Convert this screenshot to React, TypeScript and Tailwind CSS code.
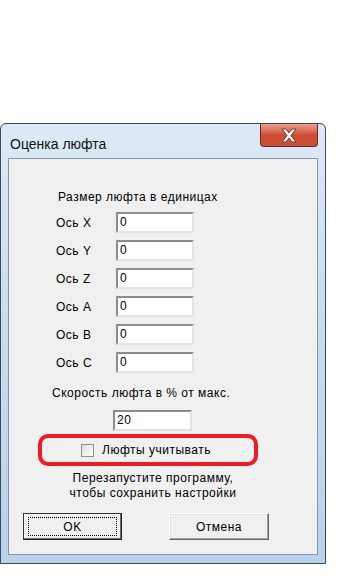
const axes = ['X', 'Y', 'Z', 'A', 'B', 'C']

function Field({ value, w = 'w-[78px]' }: { value: string; w?: string }) {
  return (
    <div
      className={`${w} h-[21px] border-2 border-t-[#8c8c8c] border-l-[#8c8c8c] border-r-[#e3e3e3] border-b-[#e3e3e3] bg-white pl-[2px] text-[12px] leading-[16px]`}
    >
      {value}
    </div>
  )
}

export default function App() {
  return (
    <div className="h-[576px] w-[340px] overflow-hidden bg-white pt-[123px] font-['Liberation_Sans',Arial,sans-serif] text-black">
      {/* window */}
      <div className="flex h-[441px] w-[326px] flex-col rounded-t-[6px] border border-[#3c4a58] bg-gradient-to-b from-[#dde9f6] via-[#c6dbf0] to-[#b9d2ec]">
        {/* title bar */}
        <div className="flex h-[34px] shrink-0 items-start justify-between">
          <div className="pl-[9px] pt-[11px] text-[14px] leading-[18px] text-[#111]">Оценка люфта</div>
          <div className="mr-[7px] flex h-[23px] w-[58px] items-center justify-center rounded-b-[4px] border border-t-0 border-[#6b2a22] bg-gradient-to-b from-[#e8a093] via-[#cf4a32] to-[#c8523c]">
            <svg width="18" height="15" viewBox="0 0 18 15">
              <path d="M2 1 L6 1 L9 5 L12 1 L16 1 L11 7.5 L16 14 L12 14 L9 10 L6 14 L2 14 L7 7.5 Z" fill="#fff" stroke="#6d3a30" strokeWidth="1" />
            </svg>
          </div>
        </div>

        {/* client area */}
        <div className="mx-[7px] mb-[8px] flex flex-1 flex-col border border-[#8596a8] bg-[#f0f0f0] text-[12px] tracking-[0.5px]">
          <div className="ml-[49px] mt-[30px] leading-[16px]">Размер люфта в единицах</div>

          <div className="mt-[7px] flex flex-col gap-[7px]">
            {axes.map((a) => (
              <div key={a} className="flex h-[21px] items-center">
                <div className="ml-[47px] w-[60px]">Ось {a}</div>
                <Field value="0" />
              </div>
            ))}
          </div>

          <div className="ml-[43px] mt-[12px] leading-[16px]">Скорость люфта в % от макс.</div>
          <div className="ml-[104px] mt-[9px]">
            <Field value="20" w="w-[79px]" />
          </div>

          <div className="ml-[29px] mt-[3px] flex h-[32px] w-[220px] items-center rounded-[10px] border-[4px] border-[#ed1c24] pl-[39px]">
            <div className="h-[13px] w-[13px] border border-[#8e8f8f] bg-gradient-to-br from-[#dcdcdc] to-white" />
            <span className="ml-[8px]">Люфты учитывать</span>
          </div>

          <div className="mt-[5px] w-[288px] text-center leading-[15px]">
            Перезапустите программу,
            <br />
            чтобы сохранить настройки
          </div>

          <div className="ml-[14px] mt-[12px] flex gap-[47px]">
            <div className="flex h-[27px] w-[99px] items-center justify-center border border-[#333] border-r-[#222] border-b-[#222] bg-[#f0f0f0] shadow-[inset_-1px_-1px_0_#696969,inset_1px_1px_0_#fff]">
              <div className="flex h-[19px] w-[89px] items-center justify-center border border-dotted border-black">OK</div>
            </div>
            <div className="flex h-[27px] w-[100px] items-center justify-center border border-[#fff] border-r-[#696969] border-b-[#696969] bg-[#f0f0f0] shadow-[inset_-1px_-1px_0_#a0a0a0,inset_1px_1px_0_#e3e3e3]">
              Отмена
            </div>
          </div>
        </div>
      </div>
    </div>
  )
}
